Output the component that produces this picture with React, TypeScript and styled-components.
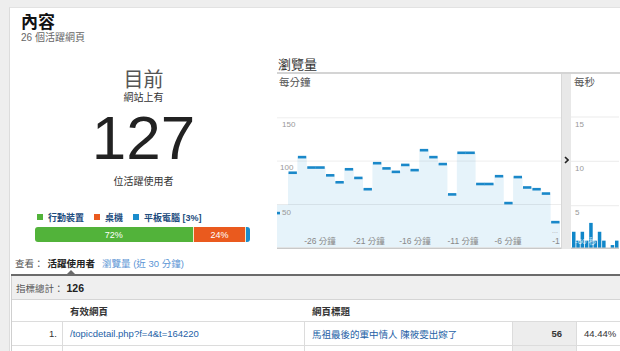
import React from 'react';
import styled, { createGlobalStyle } from 'styled-components';

const GlobalStyle = createGlobalStyle`
  html, body {
    margin: 0;
    padding: 0;
    background: #eeeeee;
  }
  body {
    font-family: "Liberation Sans", "Noto Sans CJK TC", sans-serif;
    color: #333;
    overflow: hidden;
  }
`;

const minuteViews = [86, 104, 92, 92, 83, 75, 90, 80, 67, 97, 91, 87, 95, 89, 112, 104, 96, 61, 109, 109, 73, 73, 82, 51, 81, 69, 67, 62, 29];
const minuteLabels = [
    { x: 43, text: '-26 分鐘' },
    { x: 92, text: '-21 分鐘' },
    { x: 138, text: '-16 分鐘' },
    { x: 186, text: '-11 分鐘' },
    { x: 231, text: '-6 分鐘' },
    { x: 279, text: '-1' },
];
const secondBars = [
    { x: 1, v: 2 }, { x: 5.3, v: 1 }, { x: 9.6, v: 2 }, { x: 13.9, v: 1 },
    { x: 18.2, v: 3 }, { x: 22.5, v: 1 }, { x: 26.8, v: 2 }, { x: 31.1, v: 1 },
    { x: 39.7, v: 0.5 }, { x: 44, v: 1 },
];

const BLUE = '#1a88c9';

const Page = styled.div`
    width: 620px;
    height: 351px;
    padding: 7px 0 0 9px;
    box-sizing: border-box;
    overflow: hidden;
`

const Card = styled.div`
    height: 100%;
    background: #fff;
    border-left: 1px solid #dcdcdc;
    border-top: 1px solid #e2e2e2;
    box-sizing: border-box;
    overflow: hidden;
`

const Header = styled.div`
    padding: 6px 0 0 11px;
`

const Title = styled.div`
    font-size: 17px;
    font-weight: bold;
    line-height: 18px;
    color: #111;
`

const Subtitle = styled.div`
    font-size: 10px;
    line-height: 12px;
    color: #666;
`

const TopSection = styled.div`
    display: flex;
    height: 205px;
`

const NowPanel = styled.div`
    width: 267px;
    flex-shrink: 0;
    display: flex;
    flex-direction: column;
    align-items: center;
`

const NowLabel = styled.div`
    margin-top: 24px;
    font-size: 20px;
    line-height: 24px;
    color: #555;
`

const SmallCaption = styled.div<{ $gap?: number }>`
    margin-top: ${props => props.$gap || 0}px;
    font-size: 10px;
    line-height: 12px;
    color: #333;
`

const BigNumber = styled.div`
    margin-top: 3px;
    font-size: 62px;
    line-height: 62px;
    color: #222;
`

const Legend = styled.div`
    align-self: flex-start;
    margin: 23px 0 0 27px;
    display: flex;
    align-items: center;
    height: 12px;
`

const LegendItem = styled.span<{ $color: string }>`
    display: flex;
    align-items: center;
    margin-right: 10px;
    font-size: 9px;
    font-weight: bold;
    color: #1d4c7e;

    &::before {
        content: '';
        width: 6px;
        height: 6px;
        margin-right: 5px;
        background: ${props => props.$color};
    }
`

const DeviceBar = styled.div`
    align-self: flex-start;
    margin: 4px 0 0 25px;
    width: 215px;
    height: 15px;
    display: flex;
    border-radius: 3px;
    overflow: hidden;
`

const DeviceSegment = styled.div<{ $color: string }>`
    display: flex;
    align-items: center;
    justify-content: center;
    background: ${props => props.$color};
    color: #fff;
    font-size: 9px;
    border-right: 1px solid #f3e9c8;

    &:last-child {
        border-right: none;
    }
`

const ViewsPanel = styled.div`
    flex: 1;
    display: flex;
    flex-direction: column;
    padding-top: 13px;
`

const ViewsTitle = styled.div`
    font-size: 13px;
    line-height: 15px;
    color: #333;
    padding-left: 1px;
    border-bottom: 2px solid #d4d4d4;
`

const ChartRow = styled.div`
    flex: 1;
    display: flex;
`

const ChartPane = styled.div<{ $width?: number }>`
    ${props => props.$width ? `width: ${props.$width}px;` : 'flex: 1;'}
    display: flex;
    flex-direction: column;
    overflow: hidden;
`

const PaneLabel = styled.div<{ $indent: number }>`
    padding: 1px 0 0 ${props => props.$indent}px;
    font-size: 10.5px;
    line-height: 14px;
    color: #555;
`

const Divider = styled.div`
    width: 10px;
    background: #e8e8e8;
    border-left: 1px solid #d8d8d8;
    display: flex;
    justify-content: center;
    padding-top: 82px;
    box-sizing: border-box;
`

const Tabs = styled.div`
    margin: 9px 0 0 1px;
    padding: 0 0 4px 4px;
    display: flex;
    align-items: center;
    font-size: 9.5px;
    line-height: 12px;
    border-bottom: 2px solid #6b6b6b;
`

const TabLabel = styled.span`
    color: #555;
    margin-right: 4px;
`

const ActiveTab = styled.span`
    position: relative;
    font-weight: bold;
    color: #222;
    margin-right: 7px;

    &::after {
        content: '';
        position: absolute;
        left: 50%;
        bottom: -4px;
        margin-left: -4px;
        border-left: 4px solid transparent;
        border-right: 4px solid transparent;
        border-bottom: 4px solid #6b6b6b;
    }
`

const TabLink = styled.span`
    color: #5a94d4;
`

const Table = styled.div`
    margin-left: 1px;
    border-left: 1px solid #cfcfcf;
`

const TotalRow = styled.div`
    height: 23px;
    display: flex;
    align-items: center;
    padding-left: 4px;
    background: #efefef;
    border-bottom: 1px solid #d5d5d5;
    font-size: 9.5px;
    color: #555;

    b {
        margin-left: 3px;
        font-size: 10.5px;
        color: #222;
    }
`

const Row = styled.div<{ $height: number }>`
    display: grid;
    grid-template-columns: 51px 242px 208px 64px 1fr;
    height: ${props => props.$height}px;
    border-bottom: 1px solid #dcdcdc;
`

const Cell = styled.div<{ $align?: string; $shade?: boolean; $divider?: boolean; $bold?: boolean }>`
    display: flex;
    align-items: center;
    justify-content: ${props => props.$align === 'right' ? 'flex-end' : 'flex-start'};
    padding: ${props => props.$align === 'right' ? '0 5px 0 0' : '0 0 0 7px'};
    background: ${props => props.$shade ? '#ededed' : 'transparent'};
    border-right: ${props => props.$divider ? '1px solid #dcdcdc' : 'none'};
    font-size: 9.5px;
    font-weight: ${props => props.$bold ? 'bold' : 'normal'};
    color: #333;
    white-space: nowrap;
    overflow: hidden;
`

const HeadCell = styled(Cell)`
    font-weight: bold;
    color: #333;
`

const Link = styled.span`
    color: #2461a6;
`

const MinuteChart = () => {
    const y = (v: number) => 158.3 - v * 0.867;
    const step = 9.38;
    let d = `M0 158.3 L0 ${y(49)} L11 ${y(49)}`;
    minuteViews.forEach((v, i) => {
        const x0 = 11 + i * step;
        d += ` L${x0} ${y(v)} L${x0 + step} ${y(v)}`;
    });
    d += ` L${11 + minuteViews.length * step} 158.3 Z`;

    return (
        <svg width="284" height="160" viewBox="0 0 284 160">
            <path d={d} fill="#e6f3fa" />
            {[28.3, 71.6, 115].map(g => (
                <rect key={g} x="0" y={g} width="284" height="1" fill="rgba(0,0,0,0.07)" />
            ))}
            <rect x="0" y={124 - 1.2} width="3" height="2.6" fill={BLUE} />
            {minuteViews.map((v, i) => {
                const x0 = 11 + i * step;
                const joined = i > 0 && minuteViews[i - 1] === v;
                return (
                    <rect key={i} x={joined ? x0 - 0.8 : x0 + 0.5} y={y(v) - 1.3}
                        width={joined ? step : step - 1} height="2.6" fill={BLUE} />
                );
            })}
            <g fontSize="8" fill="#999">
                <text x="5" y="38">150</text>
                <text x="3" y="81">100</text>
                <text x="5" y="126">50</text>
            </g>
            <g fontSize="8.5" fill="#888" textAnchor="middle">
                {minuteLabels.map(l => <text key={l.text} x={l.x} y="155">{l.text}</text>)}
                <text x="278" y="144" fontSize="7" fill="#aaa">...</text>
            </g>
            <rect x="0" y="158.5" width="284" height="1.5" fill="#c9c9c9" />
        </svg>
    );
};

const SecondChart = () => {
    const y = (v: number) => 160.5 - v * 8.87;
    return (
        <svg width="48" height="160" viewBox="0 0 48 160">
            {[27.5, 71.8, 116.2].map(g => (
                <rect key={g} x="0" y={g} width="48" height="1" fill="#ebebeb" />
            ))}
            <g fontSize="8" fill="#999">
                <text x="4" y="38">15</text>
                <text x="4" y="82">10</text>
                <text x="4" y="126">5</text>
            </g>
            {secondBars.map(b => (
                <rect key={b.x} x={b.x} y={y(b.v)} width="3.5" height={160.5 - y(b.v)} fill="#1187c9" />
            ))}
            <text x="4" y="155" fontSize="8" fill="rgba(255,255,255,0.8)">-60 秒</text>
            <rect x="0" y="158.5" width="48" height="1.5" fill="#c9c9c9" />
        </svg>
    );
};

const ChevronIcon = () => (
    <svg width="5" height="8" viewBox="0 0 5 8">
        <path d="M1 1 L4 4 L1 7" fill="none" stroke="#222" strokeWidth="1.6" />
    </svg>
);

export default function App() {
    return (
        <Page>
            <GlobalStyle />
            <Card>
                <Header>
                    <Title>內容</Title>
                    <Subtitle>26 個活躍網頁</Subtitle>
                </Header>

                <TopSection>
                    <NowPanel>
                        <NowLabel>目前</NowLabel>
                        <SmallCaption>網站上有</SmallCaption>
                        <BigNumber>127</BigNumber>
                        <SmallCaption $gap={7}>位活躍使用者</SmallCaption>
                        <Legend>
                            <LegendItem $color="#52b33a">行動裝置</LegendItem>
                            <LegendItem $color="#ea5a1e">桌機</LegendItem>
                            <LegendItem $color="#1a8ccc">平板電腦 [3%]</LegendItem>
                        </Legend>
                        <DeviceBar>
                            <DeviceSegment $color="#52b33a" style={{ width: '73.3%' }}>72%</DeviceSegment>
                            <DeviceSegment $color="#ea5a1e" style={{ width: '24%' }}>24%</DeviceSegment>
                            <DeviceSegment $color="#1a8ccc" style={{ flex: 1 }} />
                        </DeviceBar>
                    </NowPanel>

                    <ViewsPanel>
                        <ViewsTitle>瀏覽量</ViewsTitle>
                        <ChartRow>
                            <ChartPane $width={284}>
                                <PaneLabel $indent={2}>每分鐘</PaneLabel>
                                <MinuteChart />
                            </ChartPane>
                            <Divider>
                                <ChevronIcon />
                            </Divider>
                            <ChartPane>
                                <PaneLabel $indent={3}>每秒</PaneLabel>
                                <SecondChart />
                            </ChartPane>
                        </ChartRow>
                    </ViewsPanel>
                </TopSection>

                <Tabs>
                    <TabLabel>查看：</TabLabel>
                    <ActiveTab>活躍使用者</ActiveTab>
                    <TabLink>瀏覽量 (近 30 分鐘)</TabLink>
                </Tabs>

                <Table>
                    <TotalRow>
                        指標總計：<b>126</b>
                    </TotalRow>
                    <Row $height={21}>
                        <HeadCell />
                        <HeadCell>有效網頁</HeadCell>
                        <HeadCell>網頁標題</HeadCell>
                        <HeadCell />
                        <HeadCell />
                    </Row>
                    <Row $height={23}>
                        <Cell $align="right" $divider>1.</Cell>
                        <Cell $divider><Link>/topicdetail.php?f=4&amp;t=164220</Link></Cell>
                        <Cell $divider><Link>馬祖最後的軍中情人 陳筱雯出嫁了</Link></Cell>
                        <Cell $align="right" $shade $divider $bold style={{ paddingRight: 14 }}>56</Cell>
                        <Cell>44.44%</Cell>
                    </Row>
                    <Row $height={23}>
                        <Cell $divider />
                        <Cell $divider />
                        <Cell $divider />
                        <Cell $shade $divider />
                        <Cell />
                    </Row>
                </Table>
            </Card>
        </Page>
    );
}
